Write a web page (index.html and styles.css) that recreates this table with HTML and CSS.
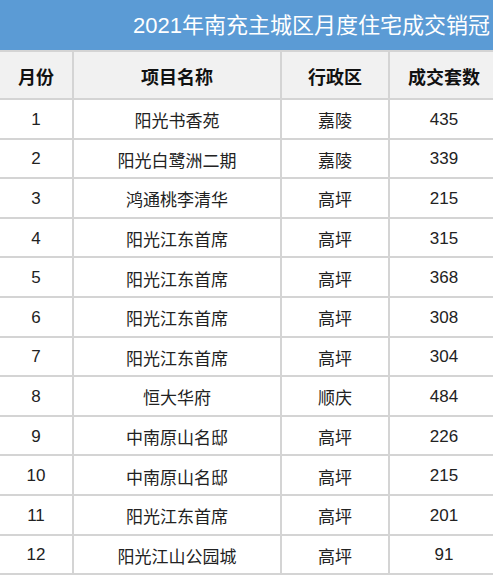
FILE: index.html
```html
<!DOCTYPE html>
<html lang="zh-CN">
<head>
<meta charset="utf-8">
<title>2021年南充主城区月度住宅成交销冠</title>
<link rel="stylesheet" href="styles.css">
</head>
<body>
<div class="page">
  <div class="sheet">
    <div class="title">2021年南充主城区月度住宅成交销冠</div>
    <div class="grid">
      <div class="cell head">月份</div>
      <div class="cell head">项目名称</div>
      <div class="cell head">行政区</div>
      <div class="cell head">成交套数</div>

      <div class="cell">1</div><div class="cell">阳光书香苑</div><div class="cell">嘉陵</div><div class="cell">435</div>
      <div class="cell">2</div><div class="cell">阳光白鹭洲二期</div><div class="cell">嘉陵</div><div class="cell">339</div>
      <div class="cell">3</div><div class="cell">鸿通桃李清华</div><div class="cell">高坪</div><div class="cell">215</div>
      <div class="cell">4</div><div class="cell">阳光江东首席</div><div class="cell">高坪</div><div class="cell">315</div>
      <div class="cell">5</div><div class="cell">阳光江东首席</div><div class="cell">高坪</div><div class="cell">368</div>
      <div class="cell">6</div><div class="cell">阳光江东首席</div><div class="cell">高坪</div><div class="cell">308</div>
      <div class="cell">7</div><div class="cell">阳光江东首席</div><div class="cell">高坪</div><div class="cell">304</div>
      <div class="cell">8</div><div class="cell">恒大华府</div><div class="cell">顺庆</div><div class="cell">484</div>
      <div class="cell">9</div><div class="cell">中南原山名邸</div><div class="cell">高坪</div><div class="cell">226</div>
      <div class="cell">10</div><div class="cell">中南原山名邸</div><div class="cell">高坪</div><div class="cell">215</div>
      <div class="cell">11</div><div class="cell">阳光江东首席</div><div class="cell">高坪</div><div class="cell">201</div>
      <div class="cell">12</div><div class="cell">阳光江山公园城</div><div class="cell">高坪</div><div class="cell">91</div>
    </div>
  </div>
</div>
</body>
</html>
```

FILE: styles.css
```css
html, body {
  margin: 0;
  padding: 0;
  background: #ffffff;
}

.page {
  width: 493px;
  height: 579px;
  overflow: hidden;
  font-family: "Liberation Sans", "Noto Sans CJK SC", sans-serif;
}

.sheet {
  width: 498px;
}

.title {
  height: 50px;
  background: #5b9bd5;
  color: #ffffff;
  font-size: 22px;
  line-height: 52px;
  padding-left: 133px;
  white-space: nowrap;
  overflow: hidden;
}

.grid {
  display: grid;
  grid-template-columns: 72px 206px 106px 108px;
  grid-template-rows: 46px repeat(12, 37.6px);
  gap: 2px;
  padding: 2px 0;
  background: #d4d4d4;
}

.cell {
  background: #ffffff;
  display: flex;
  align-items: center;
  justify-content: center;
  padding-top: 2px;
  font-size: 17px;
  color: #222222;
  white-space: nowrap;
}

.cell.head {
  background: #f1f1f1;
  font-weight: bold;
  font-size: 18px;
  color: #111111;
}
```
